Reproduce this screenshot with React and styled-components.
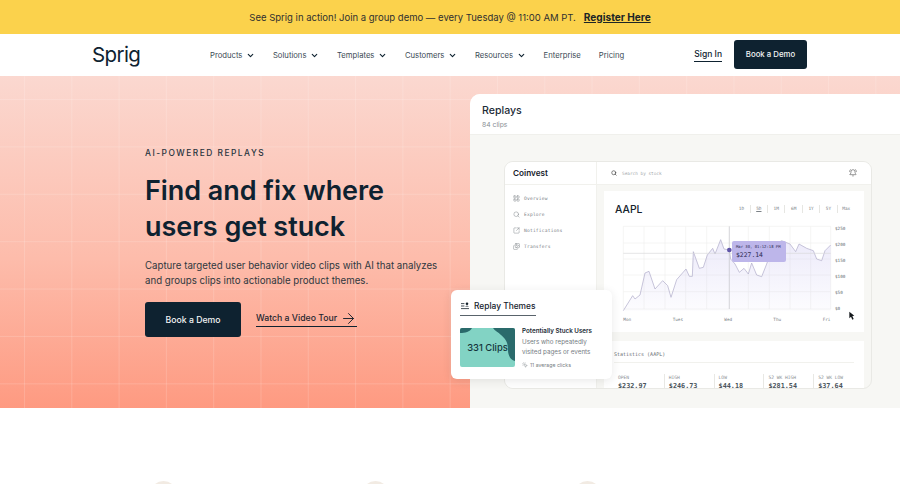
import React from "react";
import styled, { createGlobalStyle } from "styled-components";
import {
  ArrowRight,
  BellRing,
  ChevronDown,
  Images,
  LayoutGrid,
  MousePointerClick,
  Search,
  SquareArrowOutUpRight,
} from "lucide-react";

const GlobalStyle = createGlobalStyle`
  html, body {
    margin: 0;
    padding: 0;
    overflow: hidden;
    background: #fff;
  }
  * {
    box-sizing: border-box;
  }
`;

const Page = styled.div`
  width: 900px;
  height: 484px;
  overflow: hidden;
  font-family: Inter, "Liberation Sans", sans-serif;
  color: #0e2230;
`;

const Banner = styled.div`
  height: 34px;
  background: #fbd24c;
  display: flex;
  align-items: center;
  justify-content: center;
  gap: 8px;
  font-size: 9.5px;
  color: #2f3030;
`;

const BannerLink = styled.a`
  font-size: 10.1px;
  font-weight: 700;
  color: #1c2526;
  text-decoration: underline;
`;

const Nav = styled.nav`
  height: 42px;
  background: #fff;
  display: flex;
  align-items: center;
  padding: 0 93px 0 92px;
`;

const Logo = styled.div`
  width: 118px;
  margin-top: -2px;
  font-size: 20.5px;
  font-weight: 400;
  letter-spacing: -0.6px;
  color: #0e2230;
`;

const NavLinks = styled.div`
  display: flex;
  align-items: center;
  gap: 18px;
`;

const NavLink = styled.a`
  display: flex;
  align-items: center;
  gap: 3.5px;
  font-size: 7.7px;
  color: #3c4a55;
`;

const SignIn = styled.a`
  margin-left: auto;
  font-size: 8.5px;
  font-weight: 500;
  padding-bottom: 2px;
  border-bottom: 1px solid #0e2230;
  color: #0e2230;
`;

const NavButton = styled.a`
  margin: -2px 0 0 12px;
  width: 73px;
  height: 29px;
  border-radius: 3px;
  background: #0e2230;
  color: #f3f5f5;
  font-size: 7.8px;
  font-weight: 500;
  display: flex;
  align-items: center;
  justify-content: center;
`;

const Hero = styled.section`
  height: 332px;
  display: flex;
  background-color: #fcd9d2;
  background-image:
    linear-gradient(rgba(255, 255, 255, 0.15) 1px, transparent 1px),
    linear-gradient(90deg, rgba(255, 255, 255, 0.15) 1px, transparent 1px),
    linear-gradient(180deg, #fbd8d0 0%, #fdbcab 55%, #fe9a81 100%);
  background-size: 47.3px 47.4px, 47.3px 47.4px, 100% 100%;
  background-position: 24px 23px, 24px 23px, 0 0;
`;

const HeroCopy = styled.div`
  width: 470px;
  flex: none;
  padding: 71px 0 0 145px;
`;

const Eyebrow = styled.div`
  font-size: 8.4px;
  font-weight: 500;
  letter-spacing: 1.5px;
  line-height: 12px;
  color: #26333d;
`;

const Title = styled.h1`
  margin: 14px 0 0;
  font-size: 27px;
  line-height: 36px;
  font-weight: 600;
  letter-spacing: -0.05px;
  color: #0e2230;
`;

const Lead = styled.p`
  margin: 13px 0 0;
  font-size: 9.7px;
  line-height: 15px;
  color: #2f3840;
  white-space: nowrap;
`;

const Actions = styled.div`
  margin-top: 14px;
  display: flex;
  align-items: center;
  gap: 15px;
`;

const HeroButton = styled.a`
  width: 96px;
  height: 35px;
  border-radius: 3px;
  background: #0e2230;
  color: #f3f5f5;
  font-size: 8.7px;
  font-weight: 500;
  display: flex;
  align-items: center;
  justify-content: center;
`;

const TourLink = styled.a`
  display: flex;
  align-items: center;
  gap: 3px;
  margin-top: -2px;
  height: 16px;
  font-size: 8.7px;
  font-weight: 500;
  line-height: 14px;
  border-bottom: 1.5px solid #0e2230;
  color: #1e2630;
`;

const ReplaysPanel = styled.div`
  position: relative;
  width: 430px;
  flex: none;
  min-width: 0;
  margin-top: 18px;
  display: flex;
  flex-direction: column;
  background: #f7f7f4;
  border-top-left-radius: 10px;
`;

const PanelHeader = styled.div`
  height: 41px;
  padding: 9px 0 0 12px;
  background: #fff;
  border-top-left-radius: 10px;
  border-bottom: 1px solid #f0f0ec;
`;

const PanelTitle = styled.div`
  font-size: 10.6px;
  font-weight: 500;
  line-height: 15px;
  color: #1c2b36;
`;

const PanelCount = styled.div`
  margin-top: 2px;
  font-size: 6.8px;
  line-height: 10px;
  color: #8a8f93;
`;

const AppWindow = styled.div`
  width: 368px;
  margin: 26px 0 0 34px;
  height: 228px;
  display: flex;
  background: #f7f7f4;
  border: 1px solid #e9e9e5;
  border-radius: 9px;
  overflow: hidden;
`;

const Sidebar = styled.div`
  width: 92px;
  flex: none;
  background: #fff;
  border-right: 1px solid #f1f1ed;
`;

const Brand = styled.div`
  height: 23px;
  padding-left: 8px;
  display: flex;
  align-items: center;
  font-size: 8.2px;
  font-weight: 600;
  color: #15222c;
  border-bottom: 1px solid #f1f1ed;
`;

const SideList = styled.div`
  padding: 5px 0 0 8px;
`;

const SideItem = styled.div`
  height: 16px;
  display: flex;
  align-items: center;
  gap: 4px;
  font-family: "DejaVu Sans Mono", monospace;
  font-size: 4.6px;
  letter-spacing: 0.2px;
  color: #7b8186;
`;

const WindowMain = styled.div`
  flex: 1;
  min-width: 0;
  display: flex;
  flex-direction: column;
`;

const SearchBar = styled.div`
  height: 23px;
  flex: none;
  background: #fff;
  border-bottom: 1px solid #f1f1ed;
  display: flex;
  align-items: center;
  gap: 5px;
  padding: 0 14px 0 14px;
  font-family: "DejaVu Sans Mono", monospace;
  font-size: 4.4px;
  color: #a5a9ac;
`;

const SearchText = styled.span`
  flex: 1;
`;

const ChartCard = styled.div`
  margin: 6px 7px 0 7px;
  height: 141px;
  flex: none;
  background: #fff;
`;

const ChartHeader = styled.div`
  height: 30px;
  display: flex;
  align-items: center;
  justify-content: space-between;
  padding: 6px 9px 0 11px;
`;

const Ticker = styled.div`
  font-size: 10.4px;
  font-weight: 500;
  color: #15222c;
`;

const Ranges = styled.div`
  display: flex;
  align-items: center;
`;

const Range = styled.span`
  width: 17.4px;
  text-align: center;
  font-family: "DejaVu Sans Mono", monospace;
  font-size: 4.4px;
  line-height: 8px;
  color: #7b8186;
  border-right: 1px solid #e6e6e2;
  text-decoration: ${(p) => (p.$active ? "underline" : "none")};

  &:last-child {
    border-right: 0;
  }
`;

const ChartArea = styled.div`
  position: relative;
  height: 111px;
`;

const ChartSvg = styled.svg`
  display: block;
  width: 260px;
  height: 111px;
`;

const ChartTip = styled.div`
  position: absolute;
  left: 128px;
  top: 20px;
  width: 54px;
  height: 21px;
  padding: 3px 4px;
  border-radius: 2px;
  background: #bdb6ea;
  font-family: "DejaVu Sans Mono", monospace;
  color: #2b2a52;
`;

const TipDate = styled.div`
  font-size: 3.9px;
  line-height: 6px;
  white-space: nowrap;
`;

const TipValue = styled.div`
  margin-top: 1px;
  font-size: 6.4px;
  line-height: 8px;
`;

const StatsCard = styled.div`
  margin: 9px 7px 0 7px;
  flex: 1;
  background: #fff;
  padding: 10px 10px 0 10px;
  font-family: "DejaVu Sans Mono", monospace;
`;

const StatsTitle = styled.div`
  font-size: 5px;
  line-height: 7px;
  color: #666c71;
  padding-bottom: 4px;
  border-bottom: 1px solid #f1f1ed;
`;

const StatsRow = styled.div`
  margin-top: 11px;
  display: grid;
  grid-template-columns: repeat(5, 49.8px);
`;

const Stat = styled.div`
  padding-left: 4px;
  border-left: ${(p) => (p.$first ? "0" : "1px solid #e8e8e4")};
`;

const StatLabel = styled.div`
  font-size: 4.6px;
  line-height: 7px;
  color: #8b9094;
`;

const StatValue = styled.div`
  margin-top: 1px;
  font-size: 6.8px;
  font-weight: 700;
  line-height: 9px;
  color: #4b555c;
`;

const ThemesCard = styled.div`
  position: absolute;
  left: -19px;
  top: 196px;
  width: 161px;
  height: 89px;
  padding: 9px;
  background: #fff;
  border-radius: 6px;
  box-shadow: 0 2px 10px rgba(40, 40, 40, 0.1);
`;

const ThemesTab = styled.div`
  width: 76px;
  height: 17px;
  display: flex;
  align-items: center;
  gap: 5px;
  padding: 0 0 2px 1px;
  font-size: 8.4px;
  font-weight: 500;
  white-space: nowrap;
  color: #15222c;
  border-bottom: 1px solid #59636b;
`;

const ThemeRow = styled.div`
  margin-top: 12px;
  display: flex;
  gap: 7px;
`;

const ClipThumb = styled.div`
  position: relative;
  width: 55px;
  height: 39px;
  flex: none;
  display: flex;
  align-items: center;
  justify-content: center;
  border-radius: 2px;
  overflow: hidden;
  background: #82d3c4;
  font-size: 9.4px;
  font-weight: 500;
  white-space: nowrap;
  color: #14333a;
`;

const ClipShape = styled.svg`
  position: absolute;
  inset: 0;
  width: 55px;
  height: 39px;
`;

const ClipLabel = styled.span`
  position: relative;
`;

const ThemeText = styled.div`
  margin-top: -2px;
  min-width: 0;
`;

const ThemeName = styled.div`
  font-size: 6.25px;
  font-weight: 600;
  line-height: 10px;
  white-space: nowrap;
  color: #1c2b36;
`;

const ThemeDesc = styled.div`
  margin-top: 1px;
  font-size: 6.25px;
  line-height: 10px;
  white-space: nowrap;
  color: #757c82;
`;

const ThemeMeta = styled.div`
  margin-top: 4px;
  display: flex;
  align-items: center;
  gap: 2px;
  font-size: 5.2px;
  line-height: 8px;
  color: #757c82;
`;

const Features = styled.section`
  display: flex;
  gap: 185px;
  padding: 73px 0 0 150px;
`;

const FeatureDot = styled.div`
  width: 27px;
  height: 27px;
  border-radius: 50%;
  background: #f2ebe3;
`;

const navItems = [
  { label: "Products", menu: true },
  { label: "Solutions", menu: true },
  { label: "Templates", menu: true },
  { label: "Customers", menu: true },
  { label: "Resources", menu: true },
  { label: "Enterprise" },
  { label: "Pricing" },
];

const sideItems = [
  { label: "Overview", Icon: LayoutGrid },
  { label: "Explore", Icon: Search },
  { label: "Notifications", Icon: SquareArrowOutUpRight },
  { label: "Transfers", Icon: Images },
];

const ranges = ["1D", "5D", "1M", "6M", "1Y", "5Y", "Max"];

const stats = [
  { label: "OPEN", value: "$232.97" },
  { label: "HIGH", value: "$246.73" },
  { label: "LOW", value: "$44.18" },
  { label: "52 WK HIGH", value: "$281.54" },
  { label: "52 WK LOW", value: "$37.64" },
];

// traced off the reference, in 3x pixels
const pricePoints =
  "70,365 98,320 105,330 120,318 135,252 147,247 165,300 188,275 203,290 213,325 230,272 258,240 268,262 277,262 280,188 298,238 310,235 322,198 338,178 345,195 362,152 372,180 388,183 392,210 405,225 418,250 432,238 445,255 455,222 470,258 485,263 500,225 520,170 545,155 570,165 587,188 597,165 620,178 640,185 650,210 665,215 675,185 692,168";

const gridX = [70, 132, 195, 257, 320, 388, 445, 508, 570, 632, 692];
const gridY = [112, 162, 210, 258, 308, 360];
const priceLabels = [
  ["$250", 124],
  ["$200", 172],
  ["$150", 220],
  ["$100", 268],
  ["$50", 316],
  ["$0", 364],
];
const dayLabels = [
  ["Mon", 70],
  ["Tues", 218],
  ["Wed", 373],
  ["Thu", 520],
  ["Fri", 668],
];

function PriceChart() {
  return (
    <ChartSvg viewBox="12 96 780 333">
      <defs>
        <linearGradient id="priceFill" x1="0" y1="0" x2="0" y2="1">
          <stop offset="0" stopColor="#c8c2f0" stopOpacity="0.34" />
          <stop offset="1" stopColor="#c8c2f0" stopOpacity="0.05" />
        </linearGradient>
      </defs>
      {gridX.map((x) => (
        <line key={x} x1={x} x2={x} y1="112" y2="360" stroke="#f0f0ee" strokeWidth="2" />
      ))}
      {gridY.map((y) => (
        <line key={y} x1="70" x2="692" y1={y} y2={y} stroke="#f0f0ee" strokeWidth="2" />
      ))}
      <polygon points={`70,365 ${pricePoints} 692,365`} fill="url(#priceFill)" />
      <polyline points={pricePoints} fill="none" stroke="#b3afcc" strokeWidth="2.2" />
      <line x1="70" x2="692" y1="193" y2="193" stroke="#d9d9db" strokeWidth="2" />
      <line x1="388" x2="388" y1="112" y2="360" stroke="#c9c9ce" strokeWidth="2" />
      <circle cx="388" cy="183" r="7" fill="#5f55a8" />
      {priceLabels.map(([label, y]) => (
        <text key={label} x="705" y={y} fontFamily="DejaVu Sans Mono" fontSize="13" fill="#666c71">
          {label}
        </text>
      ))}
      {dayLabels.map(([label, x]) => (
        <text key={label} x={x} y="396" fontFamily="DejaVu Sans Mono" fontSize="13" fill="#7b8186">
          {label}
        </text>
      ))}
      <path
        d="M748 368 L748 388 L753 383 L757 392 L761 390 L757 381 L763 380 Z"
        fill="#14181c"
      />
    </ChartSvg>
  );
}

function ThemesIcon() {
  return (
    <svg width="8" height="8" viewBox="0 0 8 8" fill="none" stroke="#15222c" strokeWidth="0.8">
      <line x1="0" x2="3.4" y1="1.6" y2="1.6" />
      <line x1="0" x2="3.4" y1="4" y2="4" />
      <line x1="0" x2="8" y1="6.6" y2="6.6" />
      <circle cx="6" cy="1.8" r="1.3" fill="#15222c" stroke="none" />
      <path d="M4.2 4.6C4.6 3.4 7.4 3.4 7.8 4.6Z" fill="#15222c" stroke="none" />
    </svg>
  );
}

export default function App() {
  return (
    <Page>
      <GlobalStyle />
      <Banner>
        <span>See Sprig in action! Join a group demo — every Tuesday @ 11:00 AM PT.</span>
        <BannerLink>Register Here</BannerLink>
      </Banner>
      <Nav>
        <Logo>Sprig</Logo>
        <NavLinks>
          {navItems.map((item) => (
            <NavLink key={item.label}>
              {item.label}
              {item.menu && <ChevronDown size={9} strokeWidth={3} color="#0e2230" />}
            </NavLink>
          ))}
        </NavLinks>
        <SignIn>Sign In</SignIn>
        <NavButton>Book a Demo</NavButton>
      </Nav>
      <Hero>
        <HeroCopy>
          <Eyebrow>AI-POWERED REPLAYS</Eyebrow>
          <Title>
            Find and fix where
            <br />
            users get stuck
          </Title>
          <Lead>
            Capture targeted user behavior video clips with AI that analyzes
            <br />
            and groups clips into actionable product themes.
          </Lead>
          <Actions>
            <HeroButton>Book a Demo</HeroButton>
            <TourLink>
              Watch a Video Tour
              <ArrowRight size={17} strokeWidth={1.4} />
            </TourLink>
          </Actions>
        </HeroCopy>
        <ReplaysPanel>
          <PanelHeader>
            <PanelTitle>Replays</PanelTitle>
            <PanelCount>84 clips</PanelCount>
          </PanelHeader>
          <AppWindow>
            <Sidebar>
              <Brand>Coinvest</Brand>
              <SideList>
                {sideItems.map(({ label, Icon }) => (
                  <SideItem key={label}>
                    <Icon size={7} strokeWidth={1.4} color="#6a7177" />
                    {label}
                  </SideItem>
                ))}
              </SideList>
            </Sidebar>
            <WindowMain>
              <SearchBar>
                <Search size={6} strokeWidth={2.4} color="#333" />
                <SearchText>Search by stock</SearchText>
                <BellRing size={8} strokeWidth={1.5} color="#333" />
              </SearchBar>
              <ChartCard>
                <ChartHeader>
                  <Ticker>AAPL</Ticker>
                  <Ranges>
                    {ranges.map((r) => (
                      <Range key={r} $active={r === "5D"}>
                        {r}
                      </Range>
                    ))}
                  </Ranges>
                </ChartHeader>
                <ChartArea>
                  <PriceChart />
                  <ChartTip>
                    <TipDate>Mar 30, 01:12:18 PM</TipDate>
                    <TipValue>$227.14</TipValue>
                  </ChartTip>
                </ChartArea>
              </ChartCard>
              <StatsCard>
                <StatsTitle>Statistics (AAPL)</StatsTitle>
                <StatsRow>
                  {stats.map((s, i) => (
                    <Stat key={s.label} $first={i === 0}>
                      <StatLabel>{s.label}</StatLabel>
                      <StatValue>{s.value}</StatValue>
                    </Stat>
                  ))}
                </StatsRow>
              </StatsCard>
            </WindowMain>
          </AppWindow>
          <ThemesCard>
            <ThemesTab>
              <ThemesIcon />
              Replay Themes
            </ThemesTab>
            <ThemeRow>
              <ClipThumb>
                <ClipShape viewBox="0 0 55 39">
                  <path d="M0 0H12C10 4 5 5 0 5Z" fill="#2a6a6b" />
                  <path d="M33 0H55V33C51 32 48 28 48 22C48 12 44 10 41 7C38 4 35 3 33 0Z" fill="#2a6a6b" />
                </ClipShape>
                <ClipLabel>331 Clips</ClipLabel>
              </ClipThumb>
              <ThemeText>
                <ThemeName>Potentially Stuck Users</ThemeName>
                <ThemeDesc>
                  Users who repeatedly
                  <br />
                  visited pages or events
                </ThemeDesc>
                <ThemeMeta>
                  <MousePointerClick size={6} strokeWidth={1.6} />
                  11 average clicks
                </ThemeMeta>
              </ThemeText>
            </ThemeRow>
          </ThemesCard>
        </ReplaysPanel>
      </Hero>
      <Features>
        <FeatureDot />
        <FeatureDot />
        <FeatureDot />
      </Features>
    </Page>
  );
}
